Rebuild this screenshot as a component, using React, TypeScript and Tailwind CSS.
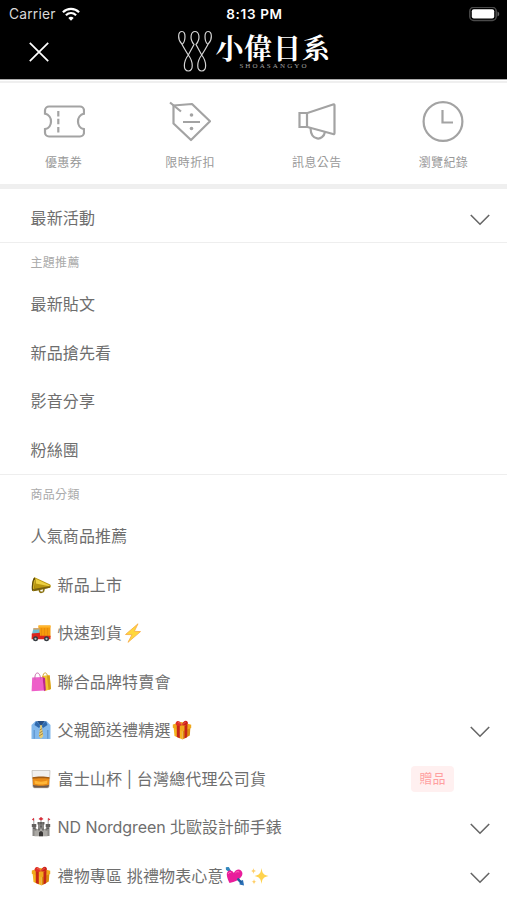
import type { ReactNode } from "react";

type EmojiName =
  | "horn"
  | "truck"
  | "bolt"
  | "bags"
  | "shirt"
  | "gift"
  | "glass"
  | "castle"
  | "heart"
  | "sparkles";

interface MenuItem {
  label: string;
  lead?: EmojiName;
  trail?: EmojiName[];
  badge?: string;
  expandable?: boolean;
}

const topics: MenuItem[] = [
  { label: "最新貼文" },
  { label: "新品搶先看" },
  { label: "影音分享" },
  { label: "粉絲團" },
];

const categories: MenuItem[] = [
  { label: "人氣商品推薦" },
  { label: "新品上市", lead: "horn" },
  { label: "快速到貨", lead: "truck", trail: ["bolt"] },
  { label: "聯合品牌特賣會", lead: "bags" },
  { label: "父親節送禮精選", lead: "shirt", trail: ["gift"], expandable: true },
  { label: "富士山杯 | 台灣總代理公司貨", lead: "glass", badge: "贈品" },
  { label: "ND Nordgreen 北歐設計師手錶", lead: "castle", expandable: true },
  { label: "禮物專區 挑禮物表心意", lead: "gift", trail: ["heart", "sparkles"], expandable: true },
];

const emojiArt: Record<EmojiName, ReactNode> = {
  horn: (
    <>
      <path d="M8 14l.8 2.800c.4 1 3.200.6 3.700-.6l.6-2.700" fill="none" stroke="#8a7210" strokeWidth="1.600" />
      <path d="M3.500 2.200L19.200 9.600c.9.700.8 2.700-.3 3.100L2.200 16.200C.3 14 .8 4.500 3.500 2.200z" fill="#b8960f" />
      <path d="M4.200 3.600L18.500 10.300l-.3 1L4.800 8.500z" fill="#ecd040" />
      <path d="M3.500 13.800l15-2.500c.8.200.7 1.200.2 1.500L2.500 16.200z" fill="#76600f" />
      <ellipse cx="2.500" cy="9.300" rx="1.500" ry="6.800" transform="rotate(8 2.500 9.300)" fill="#5e4b0d" />
      <ellipse cx="3" cy="9.600" rx=".8" ry="4.800" transform="rotate(8 3 9.600)" fill="#d0b022" />
    </>
  ),
  truck: (
    <>
      <path d="M7.500 2.500h12v11.700h-12z" fill="#f59b0b" />
      <path d="M7.500 2.500h12v2h-12z" fill="#ffb62e" />
      <path d="M10.500 5v8M13.500 5v8M16.500 5v8" stroke="#df830b" strokeWidth=".6" />
      <path d="M2.500 5.200h6v6.500H.8z" fill="#73bfd2" />
      <path d="M.8 10.500L9 9.800v3h10.500v3.500H.6z" fill="#dc251c" />
      <path d="M2.500 5.200h6v1.200H2.200z" fill="#e89b50" />
      <circle cx="4.500" cy="15.800" r="2.500" fill="#363b40" />
      <circle cx="15.500" cy="15.800" r="2.500" fill="#363b40" />
      <circle cx="4.500" cy="15.800" r="1.100" fill="#b7bec2" />
      <circle cx="15.500" cy="15.800" r="1.100" fill="#b7bec2" />
    </>
  ),
  bolt: (
    <path
      d="M15 .8L2.500 11.500l6.500.2L5 19.300 17.500 8.600l-6.200-.3z"
      fill="#ffd83b"
      stroke="#f8b04b"
      strokeWidth=".9"
      strokeLinejoin="round"
    />
  ),
  bags: (
    <>
      <path d="M11 4l7.500-1L20 17l-6 2z" fill="#f1c42f" />
      <path d="M16 4l1.500 14 2.500-1-1.300-13.500z" fill="#d69d18" />
      <path d="M12 5.500c-.4-6 4.200-6 4.500-1" fill="none" stroke="#d4a536" />
      <path d="M1.200 5.500l10.300-.5 2 13.500L.6 19.200z" fill="#ee5fc9" />
      <path d="M11.500 5l2.500 1 .8 12-1.800 1.200z" fill="#bd278f" />
      <path d="M4 8c-1-9.500 5.500-9 5.600-.5" fill="none" stroke="#c96bac" />
    </>
  ),
  shirt: (
    <>
      <path d="M4.500 1.200h11L19.500 5v13.900H.5V5z" fill="#83b9ec" />
      <path d="M3.200 10v8.700M16.800 10v8.700" stroke="#4b83be" strokeWidth=".8" />
      <path d="M6 1h8l-4 5z" fill="#254e84" />
      <path d="M5 1L3.500 5 8 8l2-2.500zM15 1l1.500 4L12 8l-2-2.500z" fill="#2f69ad" />
      <path d="M8.700 5.200h2.600l-.5 2.300 1.500 8.500-2.300 2.800L7.700 16l1.500-8.500z" fill="#e8cc72" />
      <path d="M8.700 10l2.500-1.500M8.300 13l3.400-2M8 16l4-2.500" stroke="#8d7440" strokeWidth=".8" />
    </>
  ),
  gift: (
    <>
      <path d="M1.500 6.500l9 3v10l-8-3.500z" fill="#f5b51f" />
      <path d="M10.500 9.500l8-3.500-.7 9.500-7.300 4z" fill="#dc8b0d" />
      <path d="M.8 4.500L9.500 2l9.700 2.700v3.200l-8.700 3.300L.8 7.800z" fill="#f0a91d" />
      <path d="M4.800 4l3 1.300v13l-3-1.300zM12.500 5.700l3-1.200-.4 12.800-2.600 1.300z" fill="#c52618" />
      <path d="M10 5.200C5.500 6.800 2.500 4.600 4 2.200 5.600-.2 8.800 1.500 10 5.200z" fill="#df3026" />
      <path d="M10 5.200C14.500 6.500 17 4 15.500 1.700 13.800-.3 10.500 1.500 10 5.200z" fill="#cc2119" />
      <path d="M6 2.500c1.400 0 2.500 1 3.300 2M13.800 2.200c-1.200.3-2.200 1.300-3 2.500" stroke="#fb7361" fill="none" strokeWidth=".7" />
    </>
  ),
  glass: (
    <>
      <path d="M1 1.500h18l-.8 15.800c-.1 1-.8 1.500-1.700 1.500h-13c-.9 0-1.600-.5-1.700-1.500z" fill="#f1efed" stroke="#bbb7b3" strokeWidth=".7" />
      <path d="M1.600 8.300h16.800l-.5 8c-2.500 1.300-13.300 1.300-15.800 0z" fill="#e98a16" />
      <path d="M1.600 8.300c4-1 12.800-1 16.800 0v1.500c-4-.7-12.800-.7-16.800 0z" fill="#a25b12" />
      <path d="M3.500 11.500c4 1.500 9 1.500 13 0l-.3 3.300c-3.500 1-9 1-12.400 0z" fill="#ffb637" />
      <path d="M2 15.700c4 1.500 12 1.500 16 0l-.2 1.800c-.2.800-.7 1.200-1.500 1.200H3.700c-.8 0-1.300-.4-1.500-1.200z" fill="#70594a" />
    </>
  ),
  castle: (
    <>
      <path d="M1.500 9h3.500v10H1.500zM15 9h3.500v10H15zM7 5h6v9H7z" fill="#8a8885" />
      <path d="M3.500 12h13v7.300h-13z" fill="#aaa8a4" />
      <path d="M.8 7h4.500v3H.8zM14.700 7h4.500v3h-4.500zM6.500 5h2v2.500h-2zM9 5h2v2.500H9zM11.500 5h2v2.500h-2z" fill="#62605e" />
      <path d="M3.500 11.500h2v2h-2zM7 11.500h2v2H7zM11 11.500h2v2h-2zM14.500 11.500h2v2h-2z" fill="#73716e" />
      <path d="M8 19.300V16c0-2.500 4-2.500 4 0v3.300z" fill="#383635" />
      <path d="M2.800 7V1.500M10 5V.5M17.200 7V1.500" stroke="#777" strokeWidth=".7" />
      <path d="M3 .8L.8 2.500 3 3.800zM10 .1L7.500 2 10 3.500l2.500-1.500zM17.200.8l2.200 1.700-2.200 1.300z" fill="#d9303d" />
      <path d="M3 10.500v1.500M17 10.500v1.500M10 8.500v2" stroke="#36373a" />
    </>
  ),
  heart: (
    <>
      <path d="M1.500 2l16 16" stroke="#28659e" strokeWidth="2" />
      <path d="M.8 1.200l3-.3 2.500 4.500-1 .7L1 4z" fill="#3287bd" />
      <path d="M14.500 18.500l4.500 1-1-5.500-3 1z" fill="#2a6fb6" />
      <path d="M4.500 17C2.300 12.500.4 7.200 3.300 5.100c2-1.300 4.900.1 5.500 2 1-2.800 4.700-4.700 7.200-2.700 4 3.500-.4 10.500-11.500 12.600z" fill="#e91d9b" />
      <path d="M3.200 8c.3-1.500 1.500-2 3-1.300M10.500 6.800c1-1.200 2.500-1.500 3.700-.7" stroke="#ff72bd" strokeWidth="1" fill="none" />
      <path d="M12.500 12.500l4 4" stroke="#1f5e9e" strokeWidth="2" />
    </>
  ),
  sparkles: (
    <>
      <path d="M12.500 2c.8 5.500 2 6.800 7 8-5 1.200-6.200 2.500-7 8-.8-5.500-2-6.800-7-8 5-1.200 6.200-2.500 7-8z" fill="#ffd34e" />
      <path d="M4.500 2c.3 2 .8 2.600 2.700 3-1.900.4-2.400 1-2.700 3-.3-2-.8-2.600-2.700-3 1.900-.4 2.400-1 2.700-3zM5 13c.3 1.900.8 2.400 2.500 2.800-1.700.4-2.200.9-2.500 2.800-.3-1.900-.8-2.400-2.500-2.800 1.700-.4 2.200-.9 2.500-2.800z" fill="#ffcf68" />
    </>
  ),
};

function Emoji({ name }: { name: EmojiName }) {
  return (
    <svg viewBox="0 0 20 20" className="size-5 shrink-0" aria-hidden="true">
      {emojiArt[name]}
    </svg>
  );
}

function Chevron() {
  return (
    <svg
      viewBox="0 0 20 12"
      className="ml-auto h-3 w-5 shrink-0 translate-y-0.5"
      fill="none"
      stroke="#666"
      strokeWidth="1.6"
    >
      <path d="M.8 1l9.200 9.200L19.200 1" />
    </svg>
  );
}

function StatusBar() {
  return (
    <div className="flex h-7 items-center justify-between pr-[7px] pl-[9px]">
      <div className="flex w-24 items-center gap-1.5 text-[#d8d8d8]">
        <span className="text-[13.8px] tracking-[0.2px]">Carrier</span>
        <svg viewBox="0 0 18 14" className="h-3.5 w-[18px]" fill="none" stroke="#fff" strokeWidth="2.2">
          <path d="M.9 5.300c4.600-4.500 11.600-4.500 16.200 0M3.900 8.300c3-2.800 7.200-2.800 10.200 0" />
          <path d="M9 13.700l-2.700-2.800c1.500-1.400 3.900-1.400 5.400 0z" fill="#fff" stroke="none" />
        </svg>
      </div>
      <span className="text-[13.5px] font-semibold tracking-[0.65px] text-white">8:13 PM</span>
      <div className="flex w-24 justify-end">
        <svg viewBox="0 0 31 15" className="h-[15px] w-[31px]">
          <rect x=".8" y=".3" width="26.400" height="13.200" rx="4" fill="none" stroke="#4a4a4a" strokeWidth="1.500" />
          <rect x="2.800" y="2.300" width="22.400" height="9.200" rx="2" fill="#fff" />
          <path d="M28.500 4.500c2.300 1 2.300 4 0 5z" fill="#646464" />
        </svg>
      </div>
    </div>
  );
}

function Logo() {
  return (
    <div className="flex items-start">
      <svg viewBox="0 0 38 42" className="h-[42px] w-[38px]" fill="none" stroke="#d4d4d4" strokeWidth="1.200">
        <path d="M5.500 14C8.500 11.500 9.300 1.500 5 1.500S.5 9.500 4.500 13.500C7 18 9 21.500 11.300 25c5 6.500 5.500 16 0 16s-5-9.500 0-16L17 14.500C12 8.500 14 1.500 18 1.500s6 7 1 13L24.700 25c5 6.500 5.500 16 0 16s-5-9.500 0-16c2.300-3.500 4.300-7 6.800-11.500 4-4 3.800-12-.5-12s-3.500 10-.5 12.500" />
      </svg>
      <div className="flex flex-col items-center pt-[3px]">
        <span className="h-[29px] font-['Noto_Serif_CJK_TC','Noto_Sans_CJK_TC',serif] text-[28px] leading-[29px] font-bold tracking-[0.8px] text-white">
          小偉日系
        </span>
        <span className="ml-0.5 font-['Liberation_Serif',serif] text-[7px] leading-2 tracking-[2.1px] text-[#a0a0a0]">
          SHOASANGYO
        </span>
      </div>
    </div>
  );
}

function Header() {
  return (
    <header className="h-20 border-b border-[#aaa] bg-black">
      <StatusBar />
      <div className="relative flex h-[50px] justify-center pt-0.5 pl-px">
        <button className="absolute top-[14px] left-[29px]" aria-label="close">
          <svg viewBox="0 0 20 20" className="size-5" stroke="#fff" strokeWidth="1.700">
            <path d="M.8.8l18.400 18.400M19.200.8L.8 19.200" />
          </svg>
        </button>
        <Logo />
      </div>
    </header>
  );
}

const shortcuts: { label: string; art: ReactNode }[] = [
  {
    label: "優惠券",
    art: (
      <>
        <path d="M6 6.500h31a4 4 0 0 1 4 4v3.200c-8 1.500-8 14 0 15.500v3.300a4 4 0 0 1-4 4H6a4 4 0 0 1-4-4v-3.300c8-1.500 8-14 0-15.500v-3.200a4 4 0 0 1 4-4z" />
        <path d="M15.300 11v5.500M15.300 18.800v5.500M15.300 27v5.500" />
      </>
    ),
  },
  {
    label: "限時折扣",
    art: (
      <>
        <path d="M4.500 5.500L23 4l18 17.200L22 40 4.500 23.500z" strokeLinejoin="round" />
        <path d="M1 2.500l11 9M14 22h17" />
        <circle cx="22.500" cy="15" r="1.800" fill="#a3a3a3" stroke="none" />
        <circle cx="22.500" cy="28.500" r="1.800" fill="#a3a3a3" stroke="none" />
      </>
    ),
  },
  {
    label: "訊息公告",
    art: (
      <>
        <path d="M3.500 13h8L37 4.500c1-.3 1.500 0 1.500 1V33c0 1-.5 1.300-1.500 1L11.500 27h-8z" />
        <path d="M11 13v14M14.500 28c.5 13 12.500 13.500 14.500 4" />
      </>
    ),
  },
  {
    label: "瀏覽紀錄",
    art: (
      <>
        <circle cx="21" cy="21.500" r="19.400" />
        <path d="M20.500 10v12.500h10.500" />
      </>
    ),
  },
];

function Row({ item }: { item: MenuItem }) {
  return (
    <li className="flex h-[48.5px] items-center pr-[17px] pl-[30.5px] text-base text-[#6e6e6e]">
      <span className="flex items-center whitespace-nowrap">
        {item.lead && (
          <span className="mr-[7px] flex">
            <Emoji name={item.lead} />
          </span>
        )}
        <span className={/[A-Z]/.test(item.label) ? "tracking-[-0.07px]" : "tracking-[0.15px]"}>{item.label}</span>
        {item.trail?.map((name) => (
          <span key={name} className="mr-[3px] ml-[1px] flex">
            <Emoji name={name} />
          </span>
        ))}
      </span>
      {item.badge && (
        <span className="mr-9 ml-auto flex h-[26px] w-[43px] items-center justify-center rounded bg-[#fff0f0] text-[13px] text-[#ffa0a0]">
          {item.badge}
        </span>
      )}
      {item.expandable && <Chevron />}
    </li>
  );
}

function Section({ title, items }: { title: string; items: MenuItem[] }) {
  return (
    <section className="border-t border-[#eee]">
      <h2 className="flex h-[37px] items-center pt-[2px] pl-[30.5px] text-xs tracking-[0.3px] text-[#aaa]">{title}</h2>
      <ul>
        {items.map((item) => (
          <Row key={item.label} item={item} />
        ))}
      </ul>
    </section>
  );
}

export default function App() {
  return (
    <div className="h-[900px] w-full overflow-hidden bg-white font-[Inter,'Noto_Sans_CJK_TC',sans-serif]">
      <Header />
      <nav className="mt-px flex h-[108px] justify-between border-t-2 border-b-[5px] border-[#efefef] pt-[17px] pr-[23.5px] pl-[23.5px]">
        {shortcuts.map(({ label, art }) => (
          <button key={label} className="flex w-20 flex-col items-center">
            <svg viewBox="0 0 42 42" className="size-[42px]" fill="none" stroke="#a3a3a3" strokeWidth="2.200">
              {art}
            </svg>
            <span className="mt-[11px] text-xs leading-5 tracking-[0.4px] text-[#999]">{label}</span>
          </button>
        ))}
      </nav>
      <ul className="flex h-[53px] flex-col justify-center pt-[5px]">
        <Row item={{ label: "最新活動", expandable: true }} />
      </ul>
      <Section title="主題推薦" items={topics} />
      <Section title="商品分類" items={categories} />
    </div>
  );
}
